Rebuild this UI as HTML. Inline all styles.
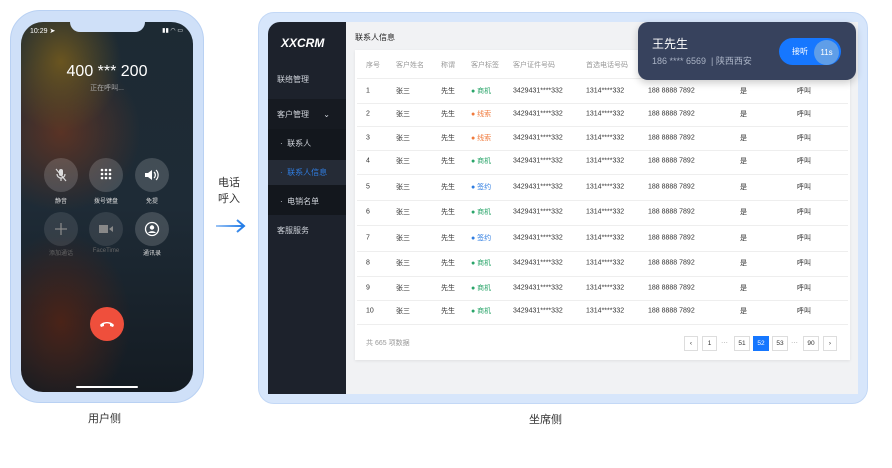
<!DOCTYPE html>
<html><head><meta charset="utf-8"><style>
*{margin:0;padding:0;box-sizing:border-box}
body{width:892px;height:468px;background:#fff;font-family:"Liberation Sans","Noto Sans CJK SC",sans-serif;position:relative;overflow:hidden;color:#333}
.a{position:absolute}
.phone{left:10px;top:10px;width:194px;height:393px;border-radius:30px;background:#cfe0f8;border:1px solid #b9d1f3}
.screen{left:21px;top:22px;width:172px;height:370px;border-radius:22px;overflow:hidden;
background:radial-gradient(ellipse 60px 70px at 40px 40px,#6a5520 0%,transparent 100%),radial-gradient(ellipse 80px 80px at 40px 110px,#5a3325 0%,transparent 100%),radial-gradient(ellipse 70px 90px at 40px 300px,#4a2318 0%,transparent 100%),linear-gradient(180deg,#1d2a33,#1e2b36 50%,#141b22)}
.notch{left:70px;top:22px;width:75px;height:10px;background:#cfe0f8;border-radius:0 0 10px 10px}
.btn{width:34px;height:34px;border-radius:50%;background:rgba(255,255,255,.16);display:flex;align-items:center;justify-content:center}
.bl{font-size:6px;color:#ddd;width:50px;text-align:center}
.desk{left:258px;top:12px;width:610px;height:392px;border-radius:16px;background:#d7e6fb;border:1px solid #c3d8f6}
.side{left:268px;top:22px;width:78px;height:372px;background:#1d222c;border-radius:12px 0 0 0}
.main{left:346px;top:22px;width:512px;height:372px;background:#f1f2f4}
.m{color:#d0d4db;font-size:8px}
.card{left:355px;top:50px;width:495px;height:310px;background:#fff;box-shadow:0 1px 3px rgba(0,0,0,.08)}
.t{font-size:7px;color:#333;position:absolute;transform:translateY(-50%)}
.h{color:#999}
.line{position:absolute;left:357px;width:491px;height:1px;background:#eee}
.pg{position:absolute;top:336px;height:15px;border:1px solid #ddd;font-size:6.5px;color:#333;display:flex;align-items:center;justify-content:center;background:#fff}
</style></head><body>
<div class="a phone"></div>
<div class="a screen">
<div class="a" style="left:9px;top:5px;font-size:7px;color:#fff">10:29 ➤</div>
<div class="a" style="right:10px;top:5px;font-size:6px;color:#fff">▮▮ ◠ ▭</div>
<div class="a" style="left:0;width:172px;top:41px;text-align:center;font-size:16px;color:#fff">400 *** 200</div>
<div class="a" style="left:0;width:172px;top:61px;text-align:center;font-size:7px;color:#aaa">正在呼叫...</div>
<div class="a btn" style="left:23px;top:136px"><svg width="14" height="14" viewBox="0 0 14 14"><rect x="5" y="1" width="4" height="7" rx="2" fill="#ddd"/><path d="M3 6a4 4 0 0 0 8 0M7 10v3M2 1l10 12" stroke="#ddd" stroke-width="1.2" fill="none"/></svg></div>
<div class="a btn" style="left:68px;top:136px"><svg width="14" height="14" viewBox="0 0 14 14" fill="#fff"><circle cx="3" cy="2" r="1.3"/><circle cx="7" cy="2" r="1.3"/><circle cx="11" cy="2" r="1.3"/><circle cx="3" cy="6" r="1.3"/><circle cx="7" cy="6" r="1.3"/><circle cx="11" cy="6" r="1.3"/><circle cx="3" cy="10" r="1.3"/><circle cx="7" cy="10" r="1.3"/><circle cx="11" cy="10" r="1.3"/></svg></div>
<div class="a btn" style="left:114px;top:136px"><svg width="16" height="14" viewBox="0 0 16 14"><path d="M1 5h3l4-3v10l-4-3H1z" fill="#fff"/><path d="M10 4a4 4 0 0 1 0 6M12 2a7 7 0 0 1 0 10" stroke="#fff" stroke-width="1.2" fill="none"/></svg></div>
<div class="a bl" style="left:15px;top:174px">静音</div>
<div class="a bl" style="left:60px;top:174px">拨号键盘</div>
<div class="a bl" style="left:106px;top:174px">免提</div>
<div class="a btn" style="left:23px;top:190px;background:rgba(255,255,255,.1)"><svg width="14" height="14"><path d="M7 1v12M1 7h12" stroke="#888" stroke-width="1.3"/></svg></div>
<div class="a btn" style="left:68px;top:190px;background:rgba(255,255,255,.1)"><svg width="16" height="12"><rect x="1" y="2" width="9" height="8" fill="#888"/><path d="M11 6l4-3v6z" fill="#888"/></svg></div>
<div class="a btn" style="left:114px;top:190px"><svg width="16" height="16"><circle cx="8" cy="8" r="6.5" stroke="#fff" stroke-width="1.3" fill="none"/><circle cx="8" cy="6.5" r="2.2" fill="#fff"/><path d="M4 12a4.5 3.5 0 0 1 8 0" fill="#fff"/></svg></div>
<div class="a bl" style="left:15px;top:226px;color:#666">添加通话</div>
<div class="a bl" style="left:60px;top:226px;color:#666">FaceTime</div>
<div class="a bl" style="left:106px;top:226px">通讯录</div>
<div class="a" style="left:69px;top:285px;width:34px;height:34px;border-radius:50%;background:#ef4f3c;display:flex;align-items:center;justify-content:center"><svg width="16" height="8" viewBox="0 0 16 8"><path d="M1 5c3-4 11-4 14 0l-1 2-3-1v-2c-2-1-4-1-6 0v2l-3 1z" fill="#fff"/></svg></div>
<div class="a" style="left:55px;top:364px;width:62px;height:2px;background:#fff;border-radius:1px"></div>
</div>
<div class="a notch"></div>
<div class="a" style="left:88px;top:410px;font-size:11px;color:#333">用户侧</div>
<div class="a" style="left:218px;top:175px;font-size:11px;color:#333;line-height:16px">电话<br>呼入</div>
<svg class="a" style="left:215px;top:218px" width="32" height="16"><defs><linearGradient id="g"><stop offset="0" stop-color="#9cc4f5"/><stop offset="1" stop-color="#1f7ae6"/></linearGradient></defs><path d="M1 8H29M22 2L29 8L22 14" stroke="url(#g)" stroke-width="2" fill="none"/></svg>

<div class="a desk"></div>
<div class="a main"></div>
<div class="a side"></div>
<div class="a" style="left:281px;top:36px;font-size:12px;font-weight:bold;font-style:italic;color:#fff">XXCRM</div>
<div class="a m" style="left:277px;top:74px">联络管理</div>
<div class="a" style="left:268px;top:99px;width:78px;height:30px;background:#161a21"></div>
<div class="a m" style="left:277px;top:109px">客户管理 <span style="margin-left:12px">⌄</span></div>
<div class="a" style="left:268px;top:129px;width:78px;height:86px;background:#13171d"></div>
<div class="a m" style="left:280px;top:138px">· &nbsp;联系人</div>
<div class="a" style="left:268px;top:160px;width:78px;height:25px;background:#252b36"></div>
<div class="a m" style="left:280px;top:167px;color:#2f7de1">· &nbsp;联系人信息</div>
<div class="a m" style="left:280px;top:196px">· &nbsp;电销名单</div>
<div class="a m" style="left:277px;top:225px">客服服务</div>
<div class="a" style="left:355px;top:32px;font-size:8px;color:#222">联系人信息</div>
<div class="a card"></div>
<div class="t h" style="left:366px;top:65px">序号</div><div class="t h" style="left:396px;top:65px">客户姓名</div><div class="t h" style="left:441px;top:65px">称谓</div><div class="t h" style="left:471px;top:65px">客户标签</div><div class="t h" style="left:513px;top:65px">客户证件号码</div><div class="t h" style="left:586px;top:65px">首选电话号码</div>
<div class="line" style="top:78px"></div>
<div id="rows"></div>
<div class="t h" style="left:366px;top:343px">共 665 项数据</div>
<div class="pg" style="left:684px;width:14px">‹</div>
<div class="pg" style="left:702px;width:15px">1</div>
<div class="t h" style="left:721px;top:343px">···</div>
<div class="pg" style="left:734px;width:16px">51</div>
<div class="pg" style="left:753px;width:16px;background:#1677ff;color:#fff;border-color:#1677ff">52</div>
<div class="pg" style="left:772px;width:16px">53</div>
<div class="t h" style="left:791px;top:343px">···</div>
<div class="pg" style="left:803px;width:16px">90</div>
<div class="pg" style="left:823px;width:14px">›</div>

<div class="a" style="left:638px;top:22px;width:218px;height:58px;background:#37425d;border-radius:10px;box-shadow:0 3px 8px rgba(0,0,0,.2)"></div>
<div class="a" style="left:652px;top:35px;font-size:12px;color:#fff">王先生</div>
<div class="a" style="left:652px;top:54px;font-size:9px;color:#aab3c5">186 **** 6569 &nbsp;| 陕西西安</div>
<div class="a" style="left:779px;top:38px;width:62px;height:27px;border-radius:14px;background:#1677ff"></div>
<div class="a" style="left:792px;top:46px;font-size:8px;color:#fff">接听</div>
<div class="a" style="left:814px;top:40px;width:25px;height:25px;border-radius:50%;background:#5f9ee8;color:#fff;font-size:8px;text-align:center;line-height:25px">11s</div>
<div class="a" style="left:529px;top:411px;font-size:11px;color:#333">坐席侧</div>
<script>
var ys=[91,114,138,161,187,212,238,263,288,311],tg=['商机','线索','线索','商机','签约','商机','签约','商机','商机','商机'],c={'商机':'#2aa56a','线索':'#f07a3c','签约':'#2f7de1'},h='';
ys.forEach(function(y,i){var t=tg[i];
h+='<div class="t" style="left:366px;top:'+y+'px">'+(i+1)+'</div><div class="t" style="left:396px;top:'+y+'px">张三</div><div class="t" style="left:441px;top:'+y+'px">先生</div><div class="t" style="left:471px;top:'+y+'px;color:'+c[t]+'">● '+t+'</div><div class="t" style="left:513px;top:'+y+'px">3429431****332</div><div class="t" style="left:586px;top:'+y+'px">1314****332</div><div class="t" style="left:648px;top:'+y+'px">188 8888 7892</div><div class="t" style="left:740px;top:'+y+'px">是</div><div class="t" style="left:797px;top:'+y+'px">呼叫</div>';
if(i<9)h+='<div class="line" style="top:'+(ys[i]+(ys[i+1]-ys[i])/2)+'px"></div>';});
h+='<div class="line" style="top:324px"></div>';
document.getElementById('rows').innerHTML=h;
</script>
</body></html>
